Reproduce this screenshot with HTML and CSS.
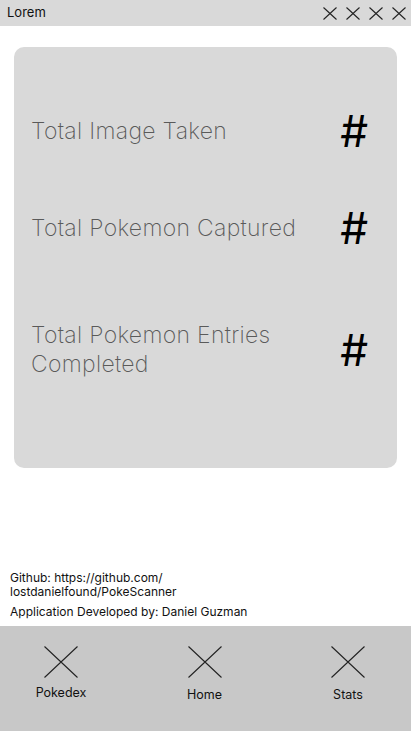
FILE: index.html
```html
<!DOCTYPE html>
<html>
<head>
<meta charset="utf-8">
<link rel="stylesheet" href="styles.css">
</head>
<body>
<div class="app">
  <header class="topbar">
    <span class="title">Lorem</span>
    <div class="top-icons">
      <svg class="x-small" viewBox="0 0 14 13"><path d="M0.5 0.5L13.5 12.5M13.5 0.5L0.5 12.5"/></svg>
      <svg class="x-small" viewBox="0 0 14 13"><path d="M0.5 0.5L13.5 12.5M13.5 0.5L0.5 12.5"/></svg>
      <svg class="x-small" viewBox="0 0 14 13"><path d="M0.5 0.5L13.5 12.5M13.5 0.5L0.5 12.5"/></svg>
      <svg class="x-small" viewBox="0 0 14 13"><path d="M0.5 0.5L13.5 12.5M13.5 0.5L0.5 12.5"/></svg>
    </div>
  </header>

  <main class="content">
    <section class="card">
      <div class="stat stat-1">
        <span class="stat-label">Total Image Taken</span>
        <span class="stat-value">#</span>
      </div>
      <div class="stat stat-2">
        <span class="stat-label">Total Pokemon Captured</span>
        <span class="stat-value">#</span>
      </div>
      <div class="stat stat-3">
        <span class="stat-label">Total Pokemon Entries<br>Completed</span>
        <span class="stat-value">#</span>
      </div>
    </section>

    <div class="credits">
      <p class="github">Github: https://github.com/<br>lostdanielfound/PokeScanner</p>
      <p class="dev">Application Developed by: Daniel Guzman</p>
    </div>
  </main>

  <nav class="navbar">
    <div class="nav-item nav-pokedex">
      <svg class="x-big" viewBox="0 0 34 32"><path d="M0.5 0.5L33.5 31.5M33.5 0.5L0.5 31.5"/></svg>
      <span class="nav-label">Pokedex</span>
    </div>
    <div class="nav-item nav-home">
      <svg class="x-big" viewBox="0 0 34 32"><path d="M0.5 0.5L33.5 31.5M33.5 0.5L0.5 31.5"/></svg>
      <span class="nav-label">Home</span>
    </div>
    <div class="nav-item nav-stats">
      <svg class="x-big" viewBox="0 0 34 32"><path d="M0.5 0.5L33.5 31.5M33.5 0.5L0.5 31.5"/></svg>
      <span class="nav-label">Stats</span>
    </div>
  </nav>
</div>
</body>
</html>
```

FILE: styles.css
```css
* { box-sizing: border-box; }

html, body {
  margin: 0;
  padding: 0;
  background: #ffffff;
  font-family: Inter, "Noto Sans", sans-serif;
  color: #000;
}

.app {
  width: 411px;
  height: 731px;
  display: flex;
  flex-direction: column;
  overflow: hidden;
}

.topbar {
  height: 26px;
  background: #d9d9d9;
  display: flex;
  align-items: center;
  justify-content: space-between;
  padding: 0 5px 0 7px;
}

.title {
  font-size: 13px;
  color: #111;
  line-height: 1;
  margin-top: -1px;
}

.top-icons {
  display: flex;
  gap: 9px;
  align-items: center;
  margin-top: 1px;
}

.x-small {
  width: 14px;
  height: 13px;
  display: block;
}

.x-small path, .x-big path {
  stroke: #222;
  stroke-width: 1.1;
  fill: none;
}

.content {
  flex: 1;
  display: flex;
  flex-direction: column;
  padding: 21px 14px 0 14px;
}

.card {
  height: 421px;
  background: #d9d9d9;
  border-radius: 10px;
  padding: 0 29px 0 17px;
  display: flex;
  flex-direction: column;
}

.stat {
  display: flex;
  align-items: center;
  justify-content: space-between;
}

.stat-1 { margin-top: 59px; height: 50px; }
.stat-2 { margin-top: 47px; height: 50px; }
.stat-3 { margin-top: 66px; height: 62px; }

.stat-label {
  font-size: 23px;
  font-weight: 200;
  color: #5a5a5a;
  line-height: 29px;
  letter-spacing: 0.3px;
}

.stat-value {
  font-size: 44px;
  font-weight: 400;
  color: #000;
  line-height: 1;
}

.credits {
  margin-top: auto;
  margin-left: -4px;
  padding-bottom: 7px;
}

.credits p {
  margin: 0;
  font-size: 12px;
  line-height: 14px;
  color: #111;
}

.credits .dev {
  margin-top: 6px;
}

.navbar {
  height: 105px;
  background: #c8c8c8;
  display: flex;
  justify-content: space-between;
  padding: 20px 39px 0 37px;
}

.nav-item {
  width: 48px;
  display: flex;
  flex-direction: column;
  align-items: center;
}

.x-big {
  width: 34px;
  height: 32px;
  display: block;
}

.nav-label {
  font-size: 12.5px;
  color: #111;
  margin-top: 7px;
  line-height: 16px;
}

.nav-home .nav-label,
.nav-stats .nav-label {
  margin-top: 9px;
}
```
